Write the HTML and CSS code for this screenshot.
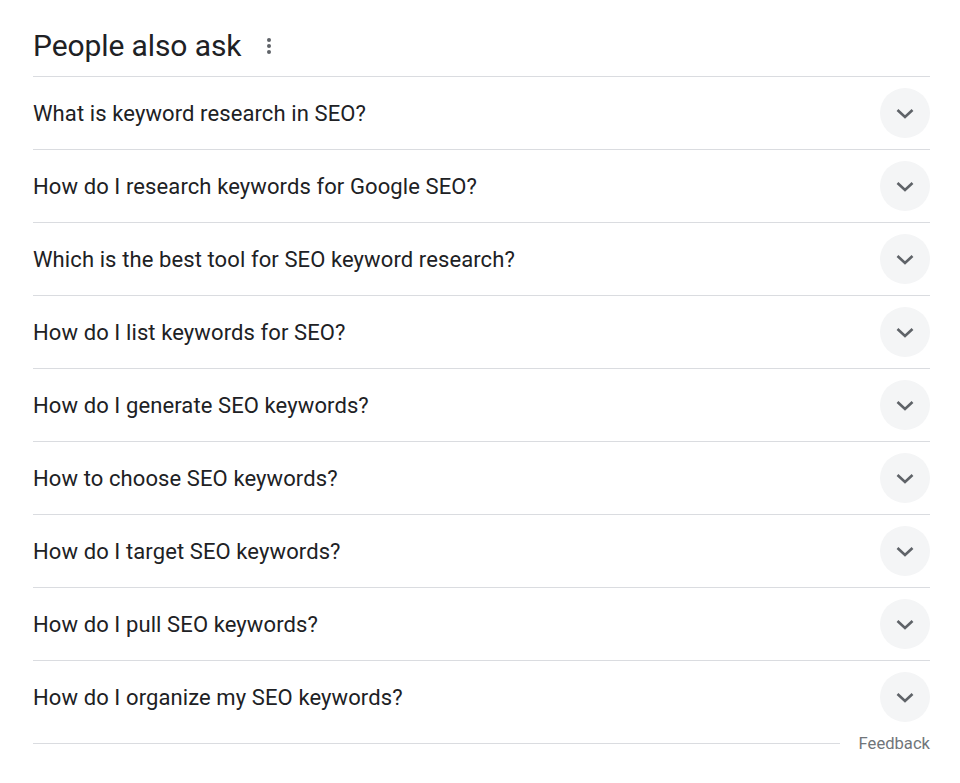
FILE: index.html
```html
<!DOCTYPE html>
<html>
<head>
<meta charset="utf-8">
<link rel="stylesheet" href="styles.css">
</head>
<body>
<div class="paa">
  <div class="header">
    <h2 class="title">People also ask</h2>
    <span class="kebab"><svg width="6" height="18" viewBox="0 0 6 18"><circle cx="3" cy="3" r="2" fill="#5f6368"/><circle cx="3" cy="9" r="2" fill="#5f6368"/><circle cx="3" cy="15" r="2" fill="#5f6368"/></svg></span>
  </div>
  <div class="list">
    <div class="row"><span class="q">What is keyword research in SEO?</span><span class="btn"><svg width="20" height="12" viewBox="0 0 20 12"><polyline points="2.5,2 10,9 17.5,2" fill="none" stroke="#5f6368" stroke-width="2.6"/></svg></span></div>
    <div class="row"><span class="q">How do I research keywords for Google SEO?</span><span class="btn"><svg width="20" height="12" viewBox="0 0 20 12"><polyline points="2.5,2 10,9 17.5,2" fill="none" stroke="#5f6368" stroke-width="2.6"/></svg></span></div>
    <div class="row"><span class="q">Which is the best tool for SEO keyword research?</span><span class="btn"><svg width="20" height="12" viewBox="0 0 20 12"><polyline points="2.5,2 10,9 17.5,2" fill="none" stroke="#5f6368" stroke-width="2.6"/></svg></span></div>
    <div class="row"><span class="q">How do I list keywords for SEO?</span><span class="btn"><svg width="20" height="12" viewBox="0 0 20 12"><polyline points="2.5,2 10,9 17.5,2" fill="none" stroke="#5f6368" stroke-width="2.6"/></svg></span></div>
    <div class="row"><span class="q">How do I generate SEO keywords?</span><span class="btn"><svg width="20" height="12" viewBox="0 0 20 12"><polyline points="2.5,2 10,9 17.5,2" fill="none" stroke="#5f6368" stroke-width="2.6"/></svg></span></div>
    <div class="row"><span class="q">How to choose SEO keywords?</span><span class="btn"><svg width="20" height="12" viewBox="0 0 20 12"><polyline points="2.5,2 10,9 17.5,2" fill="none" stroke="#5f6368" stroke-width="2.6"/></svg></span></div>
    <div class="row"><span class="q">How do I target SEO keywords?</span><span class="btn"><svg width="20" height="12" viewBox="0 0 20 12"><polyline points="2.5,2 10,9 17.5,2" fill="none" stroke="#5f6368" stroke-width="2.6"/></svg></span></div>
    <div class="row"><span class="q">How do I pull SEO keywords?</span><span class="btn"><svg width="20" height="12" viewBox="0 0 20 12"><polyline points="2.5,2 10,9 17.5,2" fill="none" stroke="#5f6368" stroke-width="2.6"/></svg></span></div>
    <div class="row last"><span class="q">How do I organize my SEO keywords?</span><span class="btn"><svg width="20" height="12" viewBox="0 0 20 12"><polyline points="2.5,2 10,9 17.5,2" fill="none" stroke="#5f6368" stroke-width="2.6"/></svg></span></div>
  </div>
  <div class="footer">
    <div class="fline"></div>
    <span class="feedback">Feedback</span>
  </div>
</div>
</body>
</html>
```

FILE: styles.css
```css
html, body {
  margin: 0;
  padding: 0;
  background: #fff;
}
body {
  font-family: Roboto, "Open Sans", Arial, sans-serif;
  color: #202124;
}
.paa {
  width: 897px;
  margin-left: 33px;
  padding-top: 27px;
}
.header {
  display: flex;
  align-items: center;
  height: 38px;
  padding-bottom: 11px;
  border-bottom: 1px solid #dadce0;
}
.title {
  margin: 0;
  font-weight: 400;
  font-size: 30px;
  line-height: 38px;
  color: #202124;
  letter-spacing: -0.1px;
}
.kebab {
  display: flex;
  margin-left: 25px;
}
.row {
  display: flex;
  align-items: center;
  justify-content: space-between;
  height: 72px;
  border-bottom: 1px solid #dadce0;
}
.row.last {
  border-bottom: none;
}
.q {
  font-size: 22px;
  letter-spacing: 0.1px;
  color: #202124;
}
.btn {
  width: 50px;
  height: 50px;
  border-radius: 50%;
  background: #f4f5f6;
  display: flex;
  align-items: center;
  justify-content: center;
}
.btn svg {
  margin-top: 1px;
}
.footer {
  display: flex;
  align-items: center;
  margin-top: 1px;
}
.fline {
  flex: 1;
  height: 1px;
  background: #dadce0;
  margin-right: 19px;
}
.feedback {
  font-size: 16.6px;
  color: #70757a;
}
```
